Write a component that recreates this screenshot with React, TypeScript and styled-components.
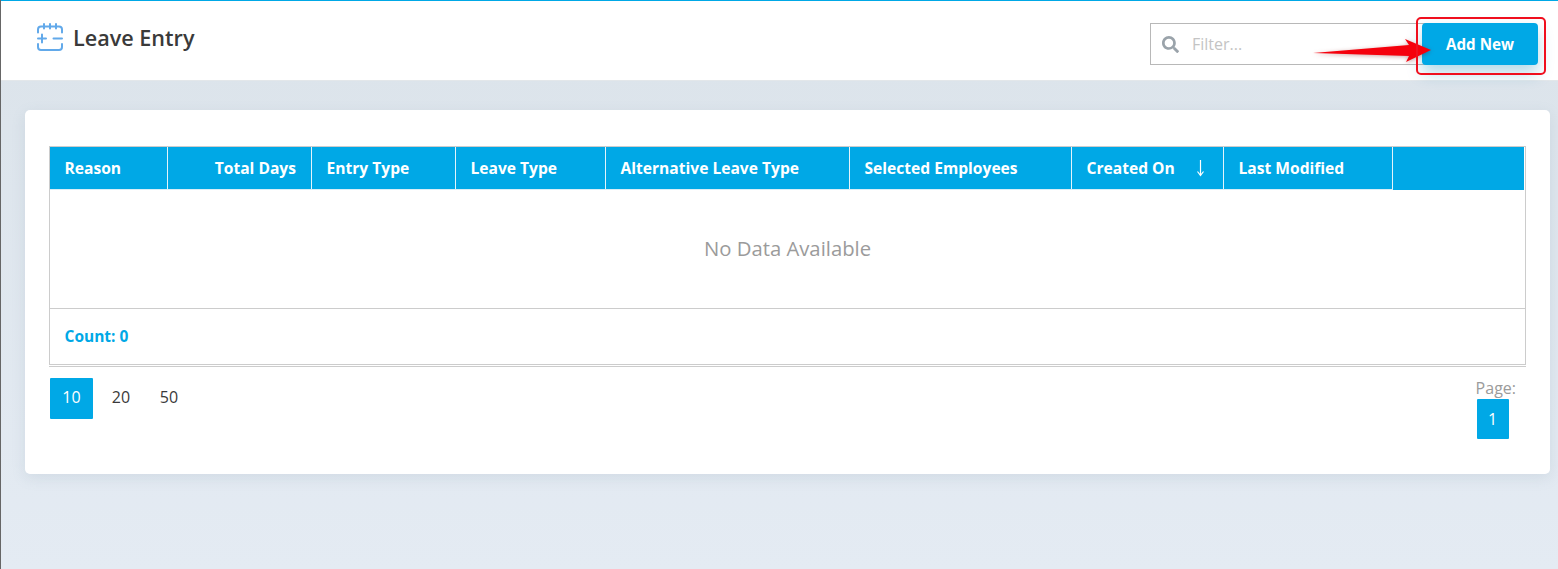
import styled, { createGlobalStyle } from 'styled-components';
import { FaSearch } from 'react-icons/fa';

const accent = '#00a8e6';
const lineColor = '#cccccc';

const GlobalStyle = createGlobalStyle`
  html, body {
    margin: 0;
    padding: 0;
    height: 100%;
  }
  body {
    font-family: 'Open Sans', 'Liberation Sans', sans-serif;
    overflow: hidden;
  }
`;

const Page = styled.div`
  position: relative;
  display: flex;
  flex-direction: column;
  width: 1558px;
  height: 569px;
  box-sizing: border-box;
  border-left: 1px solid #666666;
  background: linear-gradient(180deg, #dbe3ea 0%, #e4ebf3 100%);
  overflow: hidden;
`;

const RailMarker = styled.div`
  position: absolute;
  left: -1px;
  top: 277px;
  width: 1px;
  height: 46px;
  background: ${accent};
`;

const Header = styled.header`
  display: flex;
  justify-content: space-between;
  align-items: flex-start;
  height: 81px;
  box-sizing: border-box;
  padding: 22px 20px 0 35px;
  background: #ffffff;
  border-top: 1px solid ${accent};
  border-bottom: 1px solid #e3e7ea;
`;

const TitleGroup = styled.div`
  display: flex;
  align-items: center;
  gap: 9px;
  height: 28px;
`;

const Title = styled.h1`
  margin: 1px 0 0;
  font-size: 21.6px;
  font-weight: 600;
  line-height: 30px;
  color: #3a3a3a;
`;

const Actions = styled.div`
  display: flex;
  align-items: flex-start;
`;

const FilterBox = styled.div`
  display: flex;
  align-items: center;
  gap: 13px;
  width: 281px;
  height: 42px;
  box-sizing: border-box;
  margin-right: -9px;
  padding-left: 11px;
  border: 1px solid #b8b8b8;
  background: #ffffff;
  color: #9aa3aa;
`;

const FilterInput = styled.input`
  flex: 1;
  min-width: 0;
  border: 0;
  outline: 0;
  padding: 0;
  font-family: inherit;
  font-size: 16px;
  background: transparent;
  color: #333333;

  &::placeholder {
    color: #c4c4c4;
    opacity: 1;
  }
`;

const AddButton = styled.button`
  position: relative;
  width: 116px;
  height: 42px;
  border: 0;
  border-radius: 4px;
  background: ${accent};
  color: #ffffff;
  font-family: inherit;
  font-size: 15.2px;
  font-weight: 700;
  box-shadow: 0 8px 16px rgba(0, 130, 180, 0.3);
`;

const Highlight = styled.div`
  position: absolute;
  left: 1415px;
  top: 17px;
  width: 130px;
  height: 58px;
  box-sizing: border-box;
  border: 2px solid #f00f1e;
  border-radius: 5px;
`;

const ArrowMark = styled.svg`
  position: absolute;
  left: 1305px;
  top: 32px;
  filter: drop-shadow(0 1px 2px rgba(120, 0, 0, 0.35));
`;

const Content = styled.main`
  padding: 29px 8px 0 24px;
`;

const Card = styled.section`
  height: 364px;
  box-sizing: border-box;
  padding: 36px 24px 0 24px;
  border-radius: 5px;
  background: #ffffff;
  box-shadow: 0 4px 14px rgba(120, 140, 160, 0.16);
`;

const TableFrame = styled.div`
  border: 1px solid ${lineColor};
`;

const columns = '118px 144px 144px 150px 244px 222px 152px 169px 1fr';

const HeadRow = styled.div`
  display: grid;
  grid-template-columns: ${columns};
  height: 43px;
  box-sizing: border-box;
  background: ${accent};
  margin-right: 1px;
  border-bottom: 1px solid #d9eef7;
`;

const HeadCell = styled.div<{ $right?: boolean; $last?: boolean }>`
  display: flex;
  align-items: center;
  justify-content: ${(p) => (p.$right ? 'flex-end' : 'space-between')};
  box-sizing: border-box;
  padding: 0 15px 0 14.5px;
  margin-bottom: ${(p) => (p.$last ? '-1px' : '0')};
  background: ${accent};
  border-right: ${(p) => (p.$last ? '0' : '1px solid #e3f4fb')};
  color: #ffffff;
  font-size: 15.6px;
  font-weight: 700;
  white-space: nowrap;
`;

const SortArrow = styled.svg`
  margin-right: 3px;
`;

const EmptyRow = styled.div`
  display: flex;
  align-items: center;
  justify-content: center;
  height: 119px;
  box-sizing: border-box;
  padding-bottom: 3px;
  border-bottom: 1px solid ${lineColor};
  color: #9b9b9b;
  font-size: 20.3px;
`;

const CountRow = styled.div`
  display: flex;
  align-items: center;
  height: 55px;
  box-sizing: border-box;
  padding: 0 0 1px 14.5px;
  color: ${accent};
  font-size: 15.5px;
  font-weight: 700;
`;

const Rule = styled.div`
  height: 1px;
  margin-top: 1px;
  background: ${lineColor};
`;

const Pager = styled.div`
  display: flex;
  justify-content: space-between;
  align-items: flex-start;
  margin-top: 11px;
  padding: 0 10px 0 1px;
`;

const SizeList = styled.div`
  display: flex;
`;

const PageSize = styled.div<{ $active?: boolean }>`
  display: flex;
  align-items: center;
  justify-content: center;
  width: ${(p) => (p.$active ? '43px' : '48px')};
  height: 41px;
  box-sizing: border-box;
  padding-bottom: 3px;
  margin-right: ${(p) => (p.$active ? '4px' : '0')};
  border-radius: 1px;
  background: ${(p) => (p.$active ? accent : 'transparent')};
  color: ${(p) => (p.$active ? '#ffffff' : '#3a3a3a')};
  font-size: 16px;
`;

const PageGroup = styled.div`
  display: flex;
  flex-direction: column;
  align-items: flex-start;
`;

const PageLabel = styled.div`
  height: 21px;
  font-size: 16px;
  line-height: 21px;
  color: #9b9b9b;
`;

const PageNumber = styled.div`
  display: flex;
  align-items: center;
  justify-content: center;
  width: 32px;
  height: 40px;
  margin-left: 1px;
  border-radius: 1px;
  background: ${accent};
  color: #ffffff;
  font-size: 16px;
`;

const headers = [
  'Reason',
  'Total Days',
  'Entry Type',
  'Leave Type',
  'Alternative Leave Type',
  'Selected Employees',
  'Created On',
  'Last Modified',
];

const LeaveIcon = () => (
  <svg width="28" height="28" viewBox="0 0 28 28" fill="none" stroke="#62a9ea" strokeWidth="2" strokeLinecap="round">
    <path d="M2 9.5V6.5Q2 3.5 5 3.5H23Q26 3.5 26 6.5V9.5" />
    <path d="M2 21V24Q2 27 5 27H23Q26 27 26 24V21" />
    <path d="M8 1V5.5M14 1V5.5M20 1V5.5" />
    <path d="M2 15.5H10M6 11.5V19.5M17.5 15.5H26" />
  </svg>
);

export default function App() {
  return (
    <>
      <GlobalStyle />
      <Page>
        <RailMarker />
        <Header>
          <TitleGroup>
            <LeaveIcon />
            <Title>Leave Entry</Title>
          </TitleGroup>
          <Actions>
            <FilterBox>
              <FaSearch size={17} />
              <FilterInput placeholder="Filter..." />
            </FilterBox>
            <AddButton>Add New</AddButton>
          </Actions>
        </Header>

        <Content>
          <Card>
            <TableFrame>
              <HeadRow>
                {headers.map((h, i) => (
                  <HeadCell key={h} $right={i === 1}>
                    {h}
                    {h === 'Created On' && (
                      <SortArrow width="9" height="18" viewBox="0 0 9 18" fill="none" stroke="#ffffff" strokeWidth="1.2">
                        <path d="M4.5 1V16M1.5 12.5L4.5 16.5L7.5 12.5" />
                      </SortArrow>
                    )}
                  </HeadCell>
                ))}
                <HeadCell $last />
              </HeadRow>
              <EmptyRow>No Data Available</EmptyRow>
              <CountRow>Count: 0</CountRow>
            </TableFrame>
            <Rule />
            <Pager>
              <SizeList>
                <PageSize $active>10</PageSize>
                <PageSize>20</PageSize>
                <PageSize>50</PageSize>
              </SizeList>
              <PageGroup>
                <PageLabel>Page:</PageLabel>
                <PageNumber>1</PageNumber>
              </PageGroup>
            </Pager>
          </Card>
        </Content>

        <ArrowMark width="130" height="36" viewBox="0 0 130 36">
          <path d="M7 21L103 13L99 7L125 18L100 30L103 24Z" fill="#f5000c" />
        </ArrowMark>
        <Highlight />
      </Page>
    </>
  );
}
